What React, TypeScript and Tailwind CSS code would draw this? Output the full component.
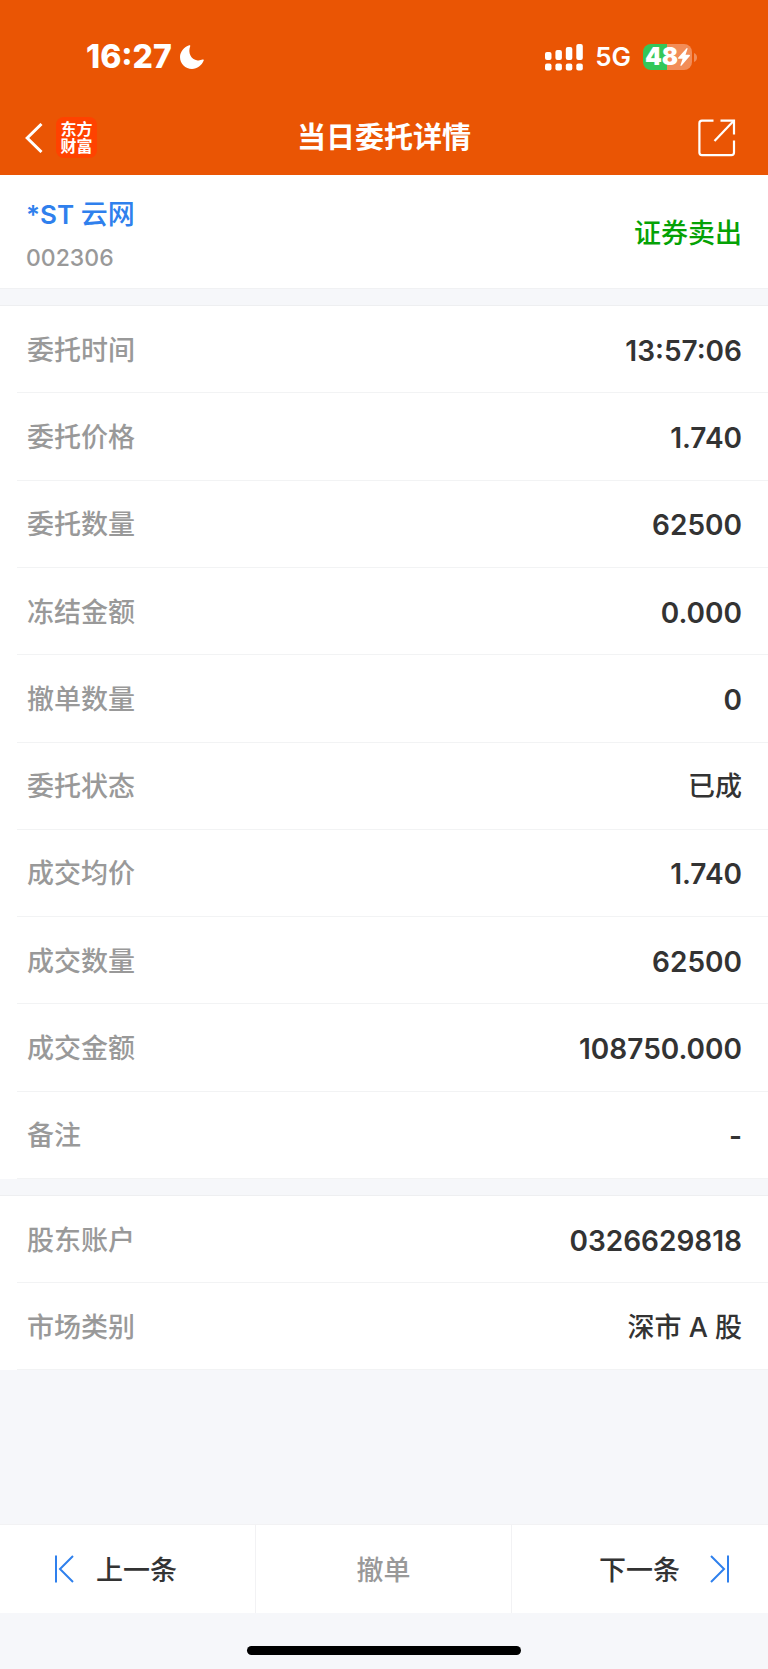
interface DetailItem {
  label: string;
  value: string;
}

const orderDetails: DetailItem[] = [
  { label: '委托时间', value: '13:57:06' },
  { label: '委托价格', value: '1.740' },
  { label: '委托数量', value: '62500' },
  { label: '冻结金额', value: '0.000' },
  { label: '撤单数量', value: '0' },
  { label: '委托状态', value: '已成' },
  { label: '成交均价', value: '1.740' },
  { label: '成交数量', value: '62500' },
  { label: '成交金额', value: '108750.000' },
  { label: '备注', value: '-' },
];

const accountDetails: DetailItem[] = [
  { label: '股东账户', value: '0326629818' },
  { label: '市场类别', value: '深市 A 股' },
];

function MoonIcon() {
  return (
    <svg width="24" height="24" viewBox="0 0 24 24" fill="currentColor" aria-hidden="true">
      <path d="M9.2 0.3C9.9 0 10.5 0.5 10.2 1.3C7.8 7.6 10.6 14.6 17.6 15.4C19.5 15.6 21 15.2 22.6 14.6C23.4 14.3 24 14.9 23.7 15.6C21.8 20.6 17.2 24 12 24C5.4 24 0 18.6 0 12C0 6.8 4.2 2 9.2 0.3Z" />
    </svg>
  );
}

function SignalIcon() {
  return (
    <svg width="38" height="27" viewBox="0 0 38 27" fill="currentColor" aria-hidden="true">
      <rect x="0" y="8" width="6.5" height="8" rx="2" />
      <rect x="10.4" y="6" width="6.5" height="10" rx="2" />
      <rect x="20.8" y="3" width="6.5" height="13" rx="2" />
      <rect x="31.3" y="0" width="6.5" height="16" rx="2" />
      <rect x="0" y="19.6" width="6.5" height="7" rx="2" />
      <rect x="10.4" y="19.6" width="6.5" height="7" rx="2" />
      <rect x="20.8" y="19.6" width="6.5" height="7" rx="2" />
      <rect x="31.3" y="19.6" width="6.5" height="7" rx="2" />
    </svg>
  );
}

function Battery() {
  return (
    <div className="flex items-center gap-[2px]">
      <div className="flex h-[26px] w-[49px] items-center justify-center rounded-lg bg-linear-to-r from-[#34c759] from-49% to-[#f28d58] to-49%">
        <span className="text-[24px] leading-[26px] font-black">48</span>
        <svg width="12" height="18" viewBox="0 0 12 18" fill="currentColor" aria-hidden="true">
          <path d="M8.6 0.2C9.2 -0.2 9.7 0.2 9.5 0.9L7.5 6.8H11.2C11.9 6.8 12.2 7.4 11.8 8L3.6 17.6C3 18.2 2.2 17.8 2.5 17L4.6 10.8H0.8C0.1 10.8 -0.2 10.2 0.3 9.6Z" />
        </svg>
      </div>
      <svg width="3" height="9" viewBox="0 0 3 9" fill="#f28d58" aria-hidden="true">
        <path d="M0 0C2 0.8 3 2.5 3 4.5S2 8.2 0 9Z" />
      </svg>
    </div>
  );
}

function BackIcon() {
  return (
    <svg width="18" height="30" viewBox="0 0 18 30" fill="none" stroke="currentColor" strokeWidth="3" aria-hidden="true">
      <path d="M16.5 1L2.2 15L16.5 29" />
    </svg>
  );
}

function ShareIcon() {
  return (
    <svg width="38" height="38" viewBox="0 0 38 38" fill="none" stroke="currentColor" strokeWidth="2.2" aria-hidden="true">
      <path d="M15.5 1.6H4Q1.4 1.6 1.4 4.2V33.6Q1.4 36.2 4 36.2H33.4Q36 36.2 36 33.6V21.5" />
      <path d="M22.5 1.6H36V15.5" />
      <path d="M36 1.6L16.5 22" />
    </svg>
  );
}

function PrevIcon() {
  return (
    <svg width="20" height="28" viewBox="0 0 20 28" fill="none" stroke="#2f80ed" strokeWidth="2" aria-hidden="true">
      <path d="M2 0.5V27.5M19 1L6 14L19 27" />
    </svg>
  );
}

function NextIcon() {
  return (
    <svg width="20" height="28" viewBox="0 0 20 28" fill="none" stroke="#2f80ed" strokeWidth="2" aria-hidden="true">
      <path d="M18 0.5V27.5M1 1L14 14L1 27" />
    </svg>
  );
}

function DetailRow({ label, value }: DetailItem) {
  const isNumeric = /^[\d.:-]+$/.test(value);

  return (
    <div className="ml-[17px] flex min-h-[87px] items-center justify-between border-b border-[#f2f3f4] pt-[3px] pr-[26px] pl-[10px]">
      <dt className="text-[#999999]">{label}</dt>
      <dd className={isNumeric ? 'text-[28px] font-semibold text-[#333333]' : 'text-[#333333]'}>{value}</dd>
    </div>
  );
}

export default function App() {
  return (
    <div className="flex min-h-screen flex-col bg-[#f6f7fa] font-['Inter','Noto_Sans_CJK_SC',sans-serif] text-[27px] leading-9 font-medium">
      <header className="bg-[#ea5504] text-white">
        <div className="flex h-[100px] items-center justify-between pt-[14px] pr-[71px] pl-[86px]">
          <div className="flex items-center gap-2">
            <span className="text-[32px] font-extrabold">16:27</span>
            <MoonIcon />
          </div>
          <div className="flex items-center gap-3">
            <SignalIcon />
            <span className="text-[26px] font-semibold">5G</span>
            <Battery />
          </div>
        </div>

        <div className="grid h-[75px] grid-cols-[1fr_auto_1fr] items-center px-[25px]">
          <div className="flex items-center gap-[13px]">
            <button type="button" aria-label="返回">
              <BackIcon />
            </button>
            <div className="flex h-[41px] w-[41px] items-center justify-center rounded-lg bg-[#ff4200] text-center text-[16px] leading-[17px] font-bold">
              东方
              <br />
              财富
            </div>
          </div>
          <h1 className="text-[29px] font-bold">当日委托详情</h1>
          <button type="button" aria-label="分享" className="justify-self-end pr-[7px]">
            <ShareIcon />
          </button>
        </div>
      </header>

      <main className="flex-1">
        <section className="flex items-center justify-between border-b border-[#f0f1f3] bg-white px-[26px] pt-5 pb-[10px]">
          <div>
            <h2 className="leading-10 text-[#2f80ed]">
              <span className="text-[26px] font-semibold">*ST </span>
              云网
            </h2>
            <p className="mt-[3px] text-[23px] leading-10 text-[#999999]">002306</p>
          </div>
          <p className="pb-[6px] text-[#05a205]">证券卖出</p>
        </section>

        <dl className="mt-4 grid min-h-[874px] auto-rows-fr border-t border-[#eeeff1] bg-white">
          {orderDetails.map((item) => (
            <DetailRow key={item.label} label={item.label} value={item.value} />
          ))}
        </dl>

        <dl className="mt-4 border-t border-[#eeeff1] bg-white">
          {accountDetails.map((item) => (
            <DetailRow key={item.label} label={item.label} value={item.value} />
          ))}
        </dl>
      </main>

      <footer>
        <nav className="grid h-[89px] grid-cols-3 divide-x divide-[#f2f2f4] border-t border-[#f2f2f4] bg-white text-[#333333]">
          <button type="button" className="flex items-center gap-[22px] pl-[54px]">
            <PrevIcon />
            <span className="pt-1">上一条</span>
          </button>
          <button type="button" disabled className="pt-1 text-[#999999]">
            撤单
          </button>
          <button type="button" className="flex items-center justify-end gap-[30px] pr-[38px]">
            <span className="pt-1">下一条</span>
            <NextIcon />
          </button>
        </nav>
        <div className="flex h-14 items-end justify-center pb-[14px]">
          <div className="h-[9px] w-[274px] rounded-full bg-black" />
        </div>
      </footer>
    </div>
  );
}
